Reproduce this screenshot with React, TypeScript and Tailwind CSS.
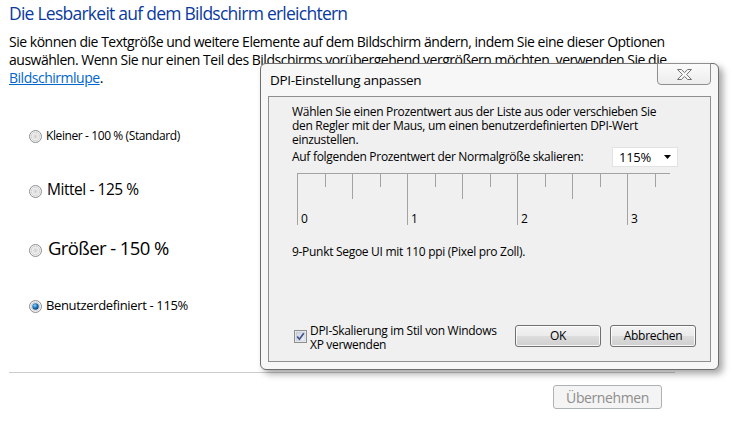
import React from 'react';

const ui = "font-['Open_Sans','Noto_Sans',sans-serif]";

function Radio({ checked = false, id }: { checked?: boolean; id: string }) {
	return (
		<svg width="13" height="13" viewBox="0 0 13 13" className="shrink-0">
			<defs>
				<radialGradient id={`${id}-bg`} cx="50%" cy="50%" r="55%">
					<stop offset="0" stopColor="#cfcfcf" />
					<stop offset="1" stopColor="#fbfbfb" />
				</radialGradient>
				<radialGradient id={`${id}-dot`} cx="40%" cy="35%" r="70%">
					<stop offset="0" stopColor="#9ad6f7" />
					<stop offset="0.5" stopColor="#1d78c0" />
					<stop offset="1" stopColor="#0d3a6a" />
				</radialGradient>
			</defs>
			<circle cx="6.5" cy="6.5" r="6" fill="#f6f6f6" stroke="#8c8e8f" />
			<circle cx="6.5" cy="6.5" r="4.3" fill={`url(#${id}-bg)`} stroke="#b9b9b9" strokeWidth="0.6" />
			{checked && <circle cx="6.5" cy="6.5" r="3.2" fill={`url(#${id}-dot)`} />}
		</svg>
	);
}

function Checkbox() {
	return (
		<svg width="13" height="13" viewBox="0 0 13 13" className="shrink-0">
			<defs>
				<linearGradient id="cb-bg" x1="0" y1="0" x2="1" y2="1">
					<stop offset="0" stopColor="#c9cfdc" />
					<stop offset="1" stopColor="#f1f3f8" />
				</linearGradient>
			</defs>
			<rect x="0.5" y="0.5" width="12" height="12" fill="#f5f5f5" stroke="#8e8f8f" />
			<rect x="2" y="2" width="9" height="9" fill="url(#cb-bg)" stroke="#b4b9c6" strokeWidth="0.5" />
			<path d="M3.2 6.6 L5.4 9.3 L9.8 3.2" fill="none" stroke="#3b4f8a" strokeWidth="1.6" />
		</svg>
	);
}

function WinButton({ label }: { label: string }) {
	return (
		<button className="w-[86px] h-[22px] rounded-[3px] border border-[#707070] bg-[linear-gradient(#f3f3f3_0%,#ebebeb_50%,#dddddd_50%,#cfcfcf_100%)] shadow-[inset_0_0_0_1px_rgba(255,255,255,0.8)] text-[12px] leading-[14px] text-black tracking-[-0.3px]">
			{label}
		</button>
	);
}

function Ruler() {
	const ticks = Array.from({ length: 14 }, (_, i) => i);
	return (
		<svg width="380" height="54" viewBox="0 0 380 54" className="block">
			<line x1="1" y1="1.5" x2="374" y2="1.5" stroke="#a3a3a3" />
			{ticks.map((i) => {
				const x = Math.round(1 + 27.5 * i) + 0.5;
				const len = i % 4 === 0 ? 53 : i % 2 === 0 ? 27 : 15;
				return <line key={i} x1={x} y1="1" x2={x} y2={len} stroke="#a3a3a3" />;
			})}
			{[0, 1, 2, 3].map((n) => (
				<text
					key={n}
					x={5 + 110 * n}
					y="51"
					fontSize="12"
					fontFamily="Open Sans, Noto Sans, sans-serif"
					fill="#000"
				>
					{n}
				</text>
			))}
		</svg>
	);
}

function DpiDialog() {
	return (
		<div className="absolute left-[260px] top-[63px] w-[459px] h-[307px] rounded-[6px] border border-[#6e6e6e] bg-[#f7f7f7] shadow-[4px_4px_7px_rgba(0,0,0,0.35)] flex flex-col">
			{/* close button */}
			<div className="absolute right-[7px] top-[-1px] w-[54px] h-[22px] rounded-b-[4px] border border-[#8f8f8f] bg-[linear-gradient(#fbfbfb,#ececec)] flex items-center justify-center">
				<svg width="15" height="11" viewBox="0 0 15 11">
					<path
						d="M0.5 0.5 H4.3 L7.5 3.6 L10.7 0.5 H14.5 L9.6 5.5 L14.5 10.5 H10.7 L7.5 7.4 L4.3 10.5 H0.5 L5.4 5.5 Z"
						fill="#fafafa"
						stroke="#727272"
						strokeLinejoin="round"
					/>
				</svg>
			</div>

			<div className="pl-[9px] pt-[7px] text-[13.5px] leading-[18px] tracking-[-0.3px] text-black">
				DPI-Einstellung anpassen
			</div>

			<div className="mx-[7px] mt-[7px] h-[266px] border border-[#8e8f8f] bg-[#f0f0f0] flex flex-col text-[12px] leading-[14px] tracking-[-0.3px] text-black">
				<div className="pl-[23px] pt-[8px]">
					<div>Wählen Sie einen Prozentwert aus der Liste aus oder verschieben Sie</div>
					<div>den Regler mit der Maus, um einen benutzerdefinierten DPI-Wert</div>
					<div>einzustellen.</div>
				</div>

				<div className="pl-[23px] pr-[32px] h-[20px] flex items-center">
					<span>Auf folgenden Prozentwert der Normalgröße skalieren:</span>
					<div className="ml-auto w-[66px] h-[20px] bg-white border border-[#e2e2e2] flex items-center pl-[6px] pr-[6px]">
						<span className="text-[13px]">115%</span>
						<svg width="7" height="4" viewBox="0 0 7 4" className="ml-auto">
							<path d="M0 0 H7 L3.5 4 Z" fill="#000" />
						</svg>
					</div>
				</div>

				<div className="pl-[27px] mt-[5px]">
					<Ruler />
				</div>

				<div className="pl-[23px] mt-[19px]">9-Punkt Segoe UI mit 110 ppi (Pixel pro Zoll).</div>

				<div className="mt-auto pb-[9px] pl-[25px] pr-[14px] flex items-start">
					<div className="mt-[6px]">
						<Checkbox />
					</div>
					<div className="ml-[3px] leading-[14px]">
						<div>DPI-Skalierung im Stil von Windows</div>
						<div>XP verwenden</div>
					</div>
					<div className="ml-auto mt-[1px] flex gap-[9px]">
						<WinButton label="OK" />
						<WinButton label="Abbrechen" />
					</div>
				</div>
			</div>
		</div>
	);
}

export default function App() {
	return (
		<div className={`relative w-[732px] h-[422px] bg-white overflow-hidden ${ui}`}>
			<div className="px-[9px] pt-[1px]">
				<h1 className="text-[17.5px] leading-[24px] tracking-[-0.75px] text-[#0a3aa0] whitespace-nowrap">
					Die Lesbarkeit auf dem Bildschirm erleichtern
				</h1>

				<div className="mt-[8px] text-[14px] leading-[18px] tracking-[-0.48px] text-black whitespace-nowrap">
					<div>
						Sie können die Textgröße und weitere Elemente auf dem Bildschirm ändern, indem Sie eine dieser Optionen
					</div>
					<div>
						auswählen. Wenn Sie nur einen Teil des Bildschirms vorübergehend vergrößern möchten, verwenden Sie die
					</div>
					<div>
						<a className="text-[#0066cc] underline">Bildschirmlupe</a>.
					</div>
				</div>

				{/* size options */}
				<div className="ml-[20px] mt-[37px] flex flex-col">
					<div className="h-[24px] flex items-center gap-[4px]">
						<Radio id="r1" />
						<span className="text-[12px] tracking-[-0.4px]">Kleiner - 100 % (Standard)</span>
					</div>
					<div className="mt-[31px] h-[24px] flex items-center gap-[5px]">
						<Radio id="r2" />
						<span className="text-[15.5px] tracking-[-0.45px] pb-[3px]">Mittel - 125 %</span>
					</div>
					<div className="mt-[35px] h-[24px] flex items-center gap-[6px]">
						<Radio id="r3" />
						<span className="text-[18.5px] tracking-[-0.6px] pb-[4px]">Größer - 150 %</span>
					</div>
					<div className="mt-[32px] h-[24px] flex items-center gap-[4px]">
						<Radio id="r4" checked />
						<span className="text-[13px] tracking-[-0.35px] pb-[1px]">Benutzerdefiniert - 115%</span>
					</div>
				</div>

				<div className="mt-[54px] w-[666px] h-px bg-[#cccccc]" />

				<div className="mt-[12px] w-[653px] flex justify-end">
					<button className="w-[109px] h-[24px] rounded-[3px] border border-[#adb2b5] bg-[#f4f4f4] text-[14px] tracking-[-0.4px] text-[#8d8d8d]">
						Übernehmen
					</button>
				</div>
			</div>

			<DpiDialog />
		</div>
	);
}
